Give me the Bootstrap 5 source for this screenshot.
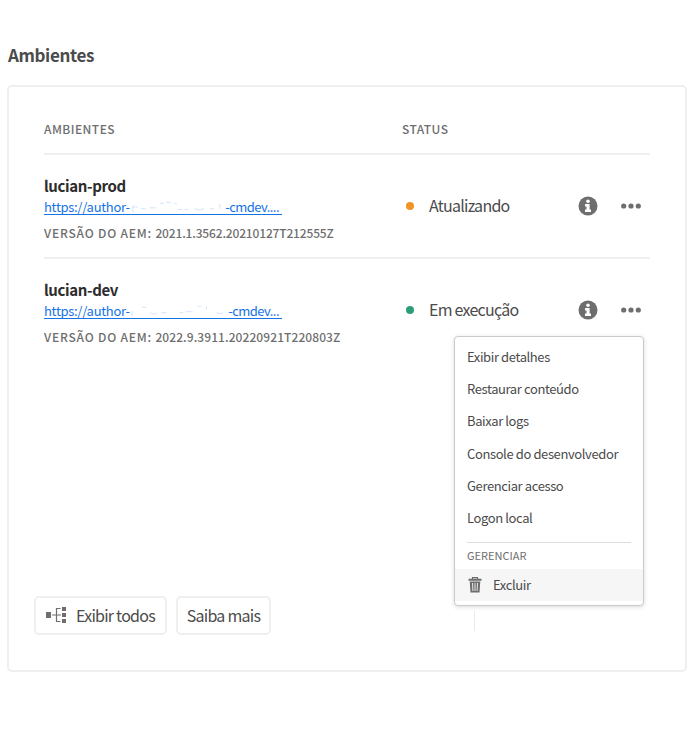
<!DOCTYPE html>
<html lang="pt-BR">
<head>
<meta charset="utf-8">
<meta name="viewport" content="width=device-width, initial-scale=1">
<title>Ambientes</title>
<link href="https://cdn.jsdelivr.net/npm/bootstrap@5.3.0/dist/css/bootstrap.min.css" rel="stylesheet">
<style>
body{font-family:"Noto Sans CJK SC","Noto Sans",sans-serif;color:#4b4b4b;background:#fff;overflow:hidden}
.page-title{font-size:17px;font-weight:700;line-height:24px;letter-spacing:-.37px;margin:43px 0 18px 8px;color:#4b4b4b}
.env-card{width:680px;height:587px;margin-left:7px;border:2px solid #efefef;border-radius:5px;padding:0 35px}
.env-grid{display:grid;grid-template-columns:358px 1fr auto}
.head-row{height:68px;padding-top:32px;border-bottom:2px solid #efefef}
.head-row span{font-size:12px;font-weight:500;line-height:20px;letter-spacing:.45px;color:#6e6e6e}
.env-row{height:104px;border-bottom:2px solid #efefef;width:606px}
.env-row.last-row{border-bottom-color:transparent}
.env-name{font-size:15px;font-weight:700;line-height:22px;letter-spacing:-.36px;color:#2c2c2c;margin-top:20px}
.env-url{display:flex;width:238px;height:18px;font-size:13px;line-height:19px;letter-spacing:-.3px;color:#1473e6;text-decoration:none;border-bottom:1px solid #1473e6;white-space:nowrap;padding-right:3px}
.url-tail{letter-spacing:-.55px}
.env-version{font-size:12px;font-weight:500;line-height:18px;letter-spacing:.8px;color:#6e6e6e;margin-top:9px;white-space:nowrap}
.ver-a{letter-spacing:-.16px}.ver-b{letter-spacing:.08px}
.status-dot{width:8px;height:8px;border-radius:50%;margin-left:4px;margin-right:15px}
.dot-orange{background:#f29423}.dot-green{background:#2d9d78}
.status-text{font-size:16px;line-height:24px;letter-spacing:-.75px;padding-bottom:2px}
.tools{gap:23px;padding-right:9px}
.env-menu{left:410px;top:77px;width:190px;height:270px;background:#fff;border:1px solid #cacaca;border-radius:4px;box-shadow:0 1px 4px rgba(0,0,0,.15);padding-top:4px;z-index:2}
.menu-entry{height:32.2px;line-height:32.2px;padding:0 12px;font-size:13px;letter-spacing:-.39px;color:#4b4b4b;white-space:nowrap}
.menu-entry.active-entry{height:32px;background:#f6f6f6}
.active-entry svg{margin-right:10px}
.menu-rule{height:1px;background:#dedede;margin:8px 12px 3px}
.menu-label{font-size:11px;line-height:18px;height:23px;padding-left:12px;color:#6e6e6e}
.foot{margin:233px 0 0 -10px;gap:9px}
.foot .btn{height:39px;border:2px solid #efefef;border-radius:5px;padding:0 0 2px;font-size:16px;line-height:24px;letter-spacing:-.75px;color:#4b4b4b;background:#fff}
.foot .btn svg{margin-right:10px}
.btn-all{width:133px}.btn-more{width:95px}
.foot-rule{width:1px;height:20px;background:#eaeaea;margin-left:194px;margin-top:15px}
</style>
</head>
<body>
<h1 class="page-title">Ambientes</h1>
<main class="env-card">
  <div class="head-row env-grid"><span>AMBIENTES</span><span>STATUS</span></div>
  <section class="env-row env-grid position-relative">
    <div>
      <div class="env-name">lucian-prod</div>
      <a class="env-url" href="#"><span>https://author-</span><svg class="flex-grow-1" height="18" viewBox="0 0 98 20" preserveAspectRatio="none"><g stroke="#1473e6" fill="none" opacity=".2"><path d="M3 9v8M3 12q3-3 5 0M11 13h5M20 12h7M31 7h4M37 6h5M45 7h3M49 14h5M56 14h4M66 13q5 3 10 0M82 13h4M92 8v5"/></g></svg><span class="url-tail">-cmdev....</span></a>
      <div class="env-version">VERSÃO DO AEM: <span class="ver-a">2021.1.3562.20210127T212555Z</span></div>
    </div>
    <div class="d-flex align-items-center"><span class="status-dot dot-orange"></span><span class="status-text">Atualizando</span></div>
    <div class="tools d-flex align-items-center">
      <svg width="20" height="20" viewBox="0 0 20 20"><circle cx="10" cy="10" r="9.5" fill="#6e6e6e"/><circle cx="10" cy="5.2" r="1.8" fill="#fff"/><path d="M7 8h4.6v5.6H13V16H7v-2.4h1.500v-3.200H7z" fill="#fff"/></svg>
      <svg width="20" height="6" viewBox="0 0 20 6" fill="#6e6e6e"><circle cx="2.7" cy="3" r="2.6"/><circle cx="10" cy="3" r="2.6"/><circle cx="17.3" cy="3" r="2.6"/></svg>
    </div>
  </section>
  <section class="env-row env-grid last-row position-relative">
    <div>
      <div class="env-name">lucian-dev</div>
      <a class="env-url" href="#"><span>https://author-</span><svg class="flex-grow-1" height="18" viewBox="0 0 98 20" preserveAspectRatio="none"><g stroke="#1473e6" fill="none" opacity=".2"><path d="M2 11v6M12 7h4M20 13q4 3 7 0M31 13h5M49 13h4M55 12h7M67 6h4M76 6v3M86 13q3 2 6 0"/></g></svg><span class="url-tail">-cmdev...</span></a>
      <div class="env-version">VERSÃO DO AEM: <span class="ver-b">2022.9.3911.20220921T220803Z</span></div>
    </div>
    <div class="d-flex align-items-center"><span class="status-dot dot-green"></span><span class="status-text">Em execução</span></div>
    <div class="tools d-flex align-items-center">
      <svg width="20" height="20" viewBox="0 0 20 20"><circle cx="10" cy="10" r="9.5" fill="#6e6e6e"/><circle cx="10" cy="5.2" r="1.8" fill="#fff"/><path d="M7 8h4.6v5.6H13V16H7v-2.4h1.500v-3.200H7z" fill="#fff"/></svg>
      <svg width="20" height="6" viewBox="0 0 20 6" fill="#6e6e6e"><circle cx="2.7" cy="3" r="2.6"/><circle cx="10" cy="3" r="2.6"/><circle cx="17.3" cy="3" r="2.6"/></svg>
    </div>
    <div class="env-menu position-absolute">
      <div class="menu-entry">Exibir detalhes</div>
      <div class="menu-entry">Restaurar conteúdo</div>
      <div class="menu-entry">Baixar logs</div>
      <div class="menu-entry">Console do desenvolvedor</div>
      <div class="menu-entry">Gerenciar acesso</div>
      <div class="menu-entry">Logon local</div>
      <div class="menu-rule"></div>
      <div class="menu-label">GERENCIAR</div>
      <div class="menu-entry active-entry d-flex align-items-center"><svg width="16" height="18" viewBox="0 0 16 18"><path d="M5.500 3V1.700h5V3" fill="none" stroke="#6e6e6e" stroke-width="1.200"/><path d="M1.500 2.800h13v2h-13zM2.700 5.500h10.600l-.8 11H3.500z" fill="#6e6e6e"/><path d="M5.500 7l.4 8M8 7v8M10.500 7l-.4 8" stroke="#f5f5f5" stroke-width=".9"/></svg><span>Excluir</span></div>
    </div>
  </section>
  <div class="foot d-flex">
    <button class="btn btn-all d-flex align-items-center justify-content-center"><svg width="20" height="18" viewBox="0 0 20 18"><path d="M0 6h5v6H0zM16 1h4v4h-4zM16 7h4v4h-4zM16 13h4v4h-4z" fill="#6e6e6e"/><path d="M6 9h9M14.500 2.500h-4v13h4" fill="none" stroke="#6e6e6e" stroke-width="1.200"/></svg><span>Exibir todos</span></button>
    <button class="btn btn-more">Saiba mais</button>
    <div class="foot-rule"></div>
  </div>
</main>
<script src="https://cdn.jsdelivr.net/npm/bootstrap@5.3.0/dist/js/bootstrap.bundle.min.js"></script>
</body>
</html>
